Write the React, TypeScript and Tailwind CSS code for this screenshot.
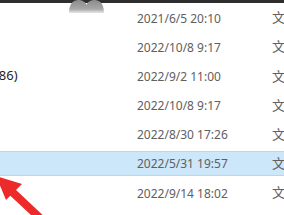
import React from 'react';

const rows = [
  { name: '', date: '2021/6/5 20:10' },
  { name: '', date: '2022/10/8 9:17' },
  { name: '(x86)', date: '2022/9/2 11:00' },
  { name: '', date: '2022/10/8 9:17' },
  { name: '', date: '2022/8/30 17:26' },
  { name: '', date: '2022/5/31 19:57', selected: true },
  { name: '', date: '2022/9/14 18:02' },
];

const App: React.FC = () => {
  return (
    <div
      className="relative w-[284px] h-[215px] overflow-hidden bg-white"
      style={{ fontFamily: '"Noto Sans", "Noto Sans CJK SC", sans-serif' }}
    >
      {/* dark strip at the top edge */}
      <div className="h-[3px] bg-[#2e2e2e]" />

      {rows.map((r, i) => (
        <div key={i} className="h-[29.17px] py-[2px]">
          <div
            className={
              'h-full flex items-center border-y ' +
              (r.selected ? 'bg-[#cce6fa] border-[#b0d8f7]' : 'border-transparent')
            }
          >
            <div className="w-[137px] shrink-0 overflow-hidden whitespace-nowrap text-[13px] text-[#1f1f1f]">
              {r.name && <span className="ml-[-12px]">{r.name}</span>}
            </div>
            <div className="w-[135px] shrink-0 whitespace-nowrap text-[12px] text-[#606060] pt-[2px]">
              {r.date}
            </div>
            <div className="whitespace-nowrap text-[13px] text-[#606060] pt-[1px]">文件夹</div>
          </div>
        </div>
      ))}

      {/* grey blob over the top strip */}
      <svg className="absolute left-[68px] top-0" width="37" height="13" viewBox="0 0 37 13">
        <defs>
          <linearGradient id="blob" x1="0" y1="0" x2="0" y2="1">
            <stop offset="0" stopColor="#8c8c8c" />
            <stop offset="0.7" stopColor="#a8a8a8" />
            <stop offset="1" stopColor="#e8e8e8" />
          </linearGradient>
        </defs>
        <path d="M1 13 C1 3 6 0 10 0 C14 0 18 2 18.5 5 C19 2 23 0 27 0 C31 0 36 3 36 13 Z" fill="url(#blob)" />
      </svg>

      {/* red arrow */}
      <svg className="absolute left-0 top-[170px]" width="60" height="45" viewBox="0 0 60 45">
        <path d="M8 18 L40 48" stroke="#ec2a2a" strokeWidth="8" strokeLinecap="butt" />
        <path d="M-4 6 L22 14 L6 30 Z" fill="#ec2a2a" />
      </svg>
    </div>
  );
};

export default App;
